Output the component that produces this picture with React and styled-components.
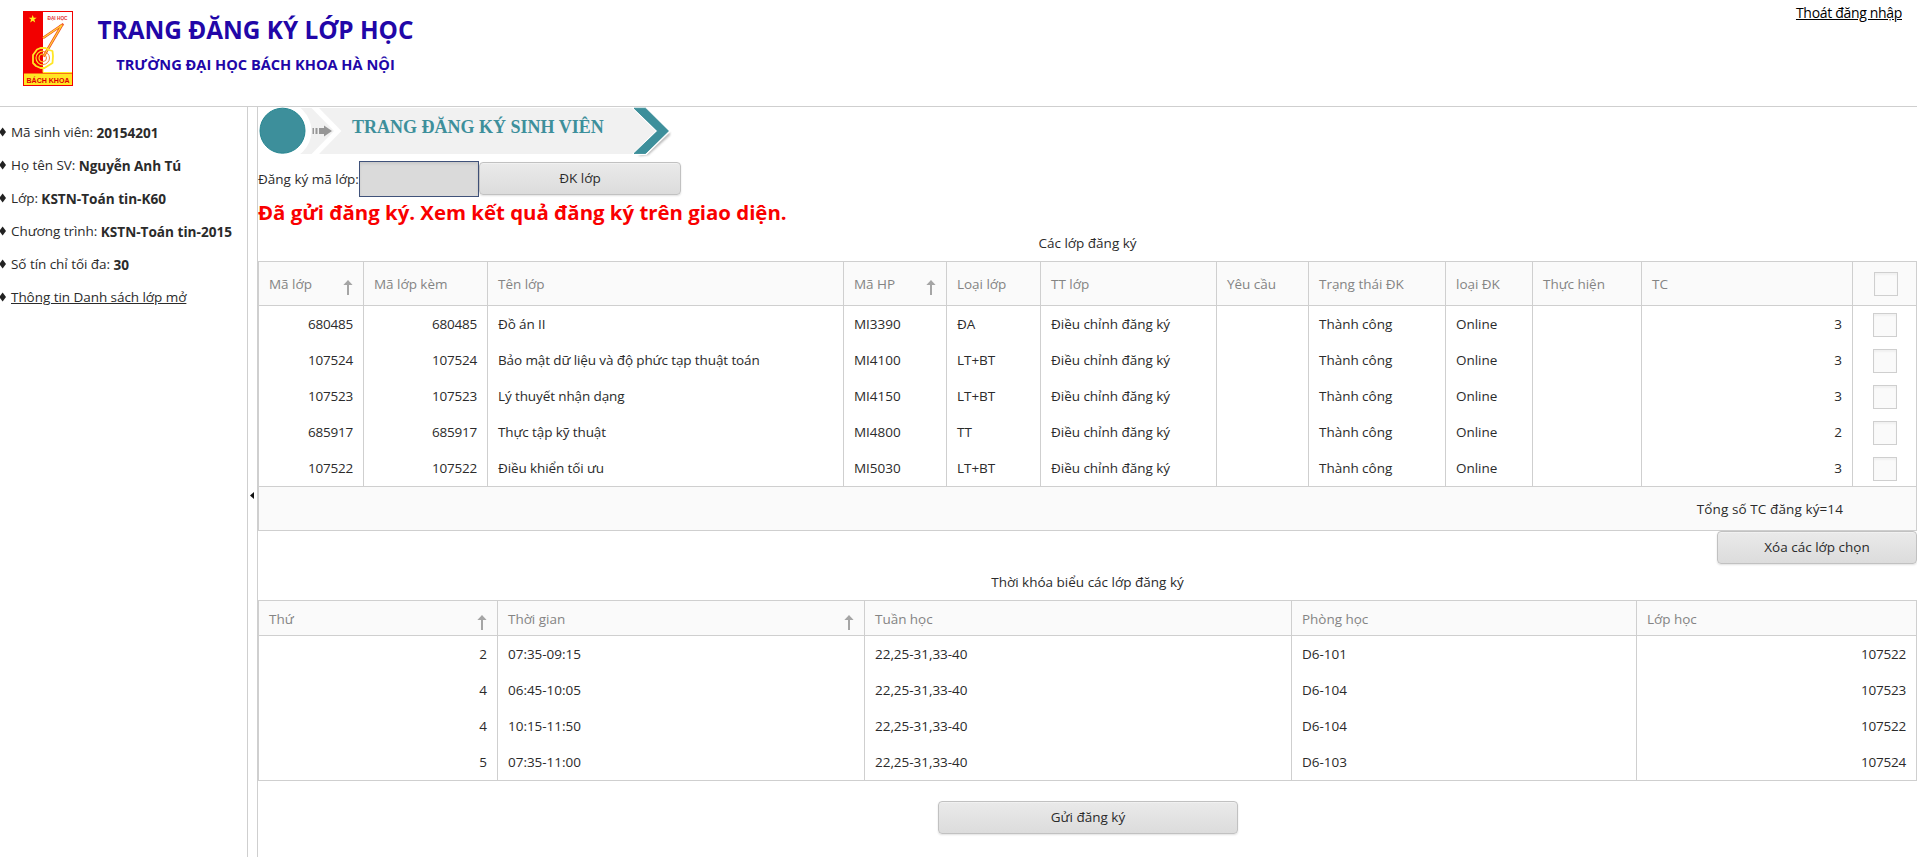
import React from 'react';
import styled, { createGlobalStyle } from 'styled-components';

const line = '#cfcfcf';

const GlobalStyle = createGlobalStyle`
  * { box-sizing: border-box; }
  body {
    margin: 0;
    background: #fff;
    color: #2b2b2b;
    font-family: "Open Sans", "Noto Sans", sans-serif;
    font-size: 13.5px;
    overflow: hidden;
  }
`;

const Page = styled.div`
  display: flex;
  flex-direction: column;
  height: 100vh;
`;

const Header = styled.header`
  display: flex;
  align-items: flex-start;
  height: 107px;
  padding: 11px 15px 0 23px;
  border-bottom: 1px solid ${line};
`;

const Logo = styled.svg`
  flex: none;
  width: 50px;
  height: 75px;
  overflow: visible;
`;

const Titles = styled.div`
  display: flex;
  flex-direction: column;
  align-items: center;
  width: 317px;
  margin-left: 24px;
  color: #2106a8;
  font-weight: 700;
  white-space: nowrap;
`;

const Title = styled.div`
  font-size: 24.35px;
  line-height: 38px;
`;

const Subtitle = styled.div`
  font-size: 14.6px;
  line-height: 28px;
  margin-top: 1px;
`;

const Logout = styled.a`
  margin: -9px 0 0 auto;
  color: #000;
  font-size: 14px;
  letter-spacing: -0.32px;
  line-height: 22px;
  text-decoration: underline;
`;

const Body = styled.div`
  display: flex;
  flex: 1;
  min-height: 0;
`;

const Sidebar = styled.aside`
  width: 248px;
  padding-top: 9px;
  border-right: 1px solid ${line};
`;

const Info = styled.div`
  display: flex;
  align-items: center;
  height: 33px;
  line-height: 33px;
  white-space: pre;
  letter-spacing: ${(p) => p.$tracking || 0}px;
  b { font-size: 13.6px; letter-spacing: ${(p) => p.$bold || 0}px; }
  a { text-decoration: underline; }
`;

const Bullet = styled.svg`
  flex: none;
  width: 6px;
  height: 10px;
  margin: 0 5px 2px 0;
`;

const Splitter = styled.div`
  display: flex;
  align-items: center;
  justify-content: center;
  width: 10px;
  padding: 26px 1px 0 0;
  border-right: 1px solid ${line};
`;

const Main = styled.main`
  display: flex;
  flex-direction: column;
  flex: 1;
  min-width: 0;
`;

const Banner = styled.div`
  display: grid;
  height: 54px;
  > * { grid-area: 1 / 1; }
`;

const BannerTitle = styled.h1`
  margin: 0 0 0 94px;
  color: #3d8f9b;
  font: 700 18px/20px "Liberation Serif", serif;
  padding-top: 10px;
`;

const RegisterForm = styled.div`
  display: flex;
  align-items: center;
  height: 36px;
`;

const Label = styled.label`
  width: 101px;
  white-space: nowrap;
  padding-bottom: 1px;
`;

const CodeInput = styled.input`
  width: 120px;
  height: 36px;
  padding: 0 6px;
  border: 1px solid #40527a;
  border-radius: 0;
  background: #dadada;
  box-shadow: inset 0 2px 3px rgba(0, 0, 0, 0.08);
  outline: none;
`;

const Button = styled.button`
  width: ${(p) => p.$width}px;
  height: 33px;
  padding: 0 0 2px;
  border: 1px solid #c1c1c1;
  border-radius: 4px;
  background: linear-gradient(#eaeaea, #dcdcdc);
  box-shadow: 0 1px 2px rgba(0, 0, 0, 0.12), inset 0 1px 0 rgba(255, 255, 255, 0.35);
  color: #2b2b2b;
  font: inherit;
`;

const SubmitButton = styled(Button)`
  align-self: center;
  margin: 20px 0 0 1px;
`;

const DeleteButton = styled(Button)`
  align-self: flex-end;
`;

const RegisterButton = styled(Button)`
  margin-bottom: 1px;
`;

const Message = styled.div`
  height: 31px;
  color: #f90000;
  font-size: 20.4px;
  font-weight: 700;
  line-height: 31px;
`;

const Caption = styled.div`
  height: ${(p) => p.$height}px;
  line-height: ${(p) => p.$line}px;
  text-align: center;
`;

const Grid = styled.div`
  border: 1px solid ${line};
  border-right: 0;
`;

const Row = styled.div`
  display: grid;
  grid-template-columns: ${(p) => p.$columns};
  height: 36px;
`;

const HeadRow = styled(Row)`
  height: ${(p) => p.$height}px;
  border-bottom: 1px solid ${line};
  background: #fafafa;
  color: #848484;
`;

const Cell = styled.div`
  display: flex;
  align-items: center;
  justify-content: ${(p) => p.$align || 'flex-start'};
  padding: 0 10px;
  border-right: 1px solid ${line};
  white-space: nowrap;
  letter-spacing: ${(p) => p.$tracking ?? -0.03}px;
`;

const HeadCell = styled(Cell)`
  justify-content: space-between;
  padding-top: ${(p) => p.$top || 0}px;
`;

const CheckCell = styled(Cell)`
  justify-content: center;
  padding: ${(p) => (p.$head ? '0 0 0 2px' : '2px 0 0 1px')};
`;

const CheckBox = styled.span`
  width: 24px;
  height: 24px;
  border: 1px solid ${line};
  background: #fafafa;
  box-shadow: inset 0 2px 2px rgba(0, 0, 0, 0.04);
`;

const SortIcon = styled.svg`
  width: 10px;
  height: 15px;
  margin-top: 7px;
`;

const Footer = styled.div`
  display: flex;
  align-items: center;
  justify-content: flex-end;
  height: 43px;
  padding-right: 73px;
  border-top: 1px solid ${line};
  border-right: 1px solid ${line};
  background: #fafafa;
  box-sizing: content-box;
  letter-spacing: 0.1px;
`;

const classColumns = '105px 124px 356px 103px 94px 176px 92px 137px 87px 109px 211px 1fr';
const timeColumns = '239px 367px 427px 345px 1fr';

const classHeads = ['Mã lớp', 'Mã lớp kèm', 'Tên lớp', 'Mã HP', 'Loại lớp', 'TT lớp', 'Yêu cầu', 'Trạng thái ĐK', 'loại ĐK', 'Thực hiện', 'TC'];
const classes = [
  ['680485', 'Đồ án II', 'MI3390', 'ĐA', '3'],
  ['107524', 'Bảo mật dữ liệu và độ phức tạp thuật toán', 'MI4100', 'LT+BT', '3'],
  ['107523', 'Lý thuyết nhận dạng', 'MI4150', 'LT+BT', '3'],
  ['685917', 'Thực tập kỹ thuật', 'MI4800', 'TT', '2'],
  ['107522', 'Điều khiển tối ưu', 'MI5030', 'LT+BT', '3'],
];

const timeHeads = ['Thứ', 'Thời gian', 'Tuần học', 'Phòng học', 'Lớp học'];
const times = [
  ['2', '07:35-09:15', 'D6-101', '107522'],
  ['4', '06:45-10:05', 'D6-104', '107523'],
  ['4', '10:15-11:50', 'D6-104', '107522'],
  ['5', '07:35-11:00', 'D6-103', '107524'],
];

const info = [
  ['Mã sinh viên: ', '20154201', 0],
  ['Họ tên SV: ', 'Nguyễn Anh Tú', -0.08],
  ['Lớp: ', 'KSTN-Toán tin-K60', 0],
  ['Chương trình: ', 'KSTN-Toán tin-2015', 0],
  ['Số tín chỉ tối đa: ', '30', 0],
];

function Sort() {
  return (
    <SortIcon viewBox="0 0 10 15">
      <path d="M5 0 9.6 5H.4Z" fill="#a5a5a5" />
      <path d="M4 4h2v11H4z" fill="#a5a5a5" />
    </SortIcon>
  );
}

function Diamond() {
  return (
    <Bullet viewBox="0 0 6 10">
      <path d="M2.6 0.6 6 5 2.6 9.4 0 6V4Z" fill="#222" />
    </Bullet>
  );
}

function SchoolLogo() {
  return (
    <Logo viewBox="0 0 50 75">
      <rect width="50" height="75" fill="#f20000" />
      <rect x="20" y="1" width="29" height="60" fill="#fff" />
      <path d="m9.7 4 1 2.800h3l-2.400 1.800.9 2.800-2.500-1.700-2.500 1.700.9-2.800L5.700 6.800h3z" fill="#ffef20" />
      <g fill="none" strokeLinejoin="round">
        <path d="m20 27 19-13-18.500 31.500M40.500 13l-4 2.500" stroke="#f04a20" strokeWidth="2.600" />
        <path d="m20 27 19-13-18.500 31.500" stroke="#ffd83a" strokeWidth="1.200" />
        <path d="m14 38.500 3.500-1.500h5l3.500 2 3.500 1 .5 5-.5 7-4 2.500-4 2.500h-4L13 55l-3-3v-8Z" stroke="#ffe625" strokeWidth="1.800" />
        <path d="M20 40a7 7 0 1 0 0 14M20 43a4 4 0 1 0 0 8" stroke="#ffed25" strokeWidth="1.100" />
        <path d="M20 40.500a6.500 6.500 0 0 1 0 13M20 43.500a3.500 3.500 0 0 1 0 7" stroke="#f47a20" strokeWidth="0.900" />
        <path d="M20 56v5.500h29" stroke="#ffed25" strokeWidth="1" />
      </g>
      <rect x="1" y="62.500" width="48" height="11.500" fill="#ffe624" />
      <text x="25" y="71.900" textAnchor="middle" textLength="43" lengthAdjust="spacingAndGlyphs" fill="#e20000" fontFamily="Liberation Sans, sans-serif" fontSize="7.900" fontWeight="700">BÁCH KHOA</text>
      <text x="34.500" y="9" textAnchor="middle" textLength="20" lengthAdjust="spacingAndGlyphs" fill="#e23030" fontFamily="Liberation Sans, sans-serif" fontSize="4.800" fontWeight="700">ĐẠI HỌC</text>
    </Logo>
  );
}

function BannerArt() {
  return (
    <svg width="420" height="54" viewBox="0 0 420 54">
      <defs>
        <filter id="soft" x="-20%" y="-20%" width="150%" height="150%">
          <feGaussianBlur stdDeviation="1.3" />
        </filter>
      </defs>
      <path d="M40 1H376l30 23-30 23H40Z" fill="#f1f1f1" />
      <circle cx="24" cy="24" r="29.500" fill="#fff" />
      <path d="M53.500 1h7.500l22.500 23L61 47h-7.500L76 24Z" fill="#fff" />
      <path d="M380 49l32-24v3l-22 20Z" fill="#777" opacity="0.55" filter="url(#soft)" />
      <path d="M373 0h15.500L413 24 388.500 48H373l24.500-24Z" fill="#fff" />
      <path d="M376 1.200h11.500L410.500 24 387.500 46.500H376L399.500 24Z" fill="#3d8f9b" stroke="#26818c" strokeWidth="0.700" />
      <circle cx="24.500" cy="23.700" r="22.500" fill="#3d8f9b" stroke="#258590" />
      <path d="M54.500 21H56v6h-1.500zM57.500 21h2v6h-2zM61 21h5v-2.500l8 5.500-8 5.500V27h-5z" fill="#969696" />
    </svg>
  );
}

export default function App() {
  return (
    <Page>
      <GlobalStyle />
      <Header>
        <SchoolLogo />
        <Titles>
          <Title>TRANG ĐĂNG KÝ LỚP HỌC</Title>
          <Subtitle>TRƯỜNG ĐẠI HỌC BÁCH KHOA HÀ NỘI</Subtitle>
        </Titles>
        <Logout>Thoát đăng nhập</Logout>
      </Header>
      <Body>
        <Sidebar>
          {info.map(([label, value, tracking]) => (
            <Info key={label} $bold={tracking} $tracking={-0.05}>
              <Diamond />
              <span>{label}</span>
              <b>{value}</b>
            </Info>
          ))}
          <Info $tracking={-0.05}>
            <Diamond />
            <a>Thông tin Danh sách lớp mở</a>
          </Info>
        </Sidebar>
        <Splitter>
          <svg width="4" height="7" viewBox="0 0 4 7"><path d="M4 0v7L0 3.500Z" fill="#111" /></svg>
        </Splitter>
        <Main>
          <Banner>
            <BannerArt />
            <BannerTitle>TRANG ĐĂNG KÝ SINH VIÊN</BannerTitle>
          </Banner>
          <RegisterForm>
            <Label>Đăng ký mã lớp:</Label>
            <CodeInput />
            <RegisterButton $width={202}>ĐK lớp</RegisterButton>
          </RegisterForm>
          <Message>Đã gửi đăng ký. Xem kết quả đăng ký trên giao diện.</Message>
          <Caption $height={33} $line={30}>Các lớp đăng ký</Caption>
          <Grid>
            <HeadRow $columns={classColumns} $height={44}>
              {classHeads.map((name, i) => (
                <HeadCell key={name}>
                  {name}
                  {(i === 0 || i === 3) && <Sort />}
                </HeadCell>
              ))}
              <CheckCell $head><CheckBox /></CheckCell>
            </HeadRow>
            {classes.map(([code, name, course, kind, credits]) => (
              <Row key={code} $columns={classColumns}>
                <Cell $align="flex-end" $tracking={-0.2}>{code}</Cell>
                <Cell $align="flex-end" $tracking={-0.2}>{code}</Cell>
                <Cell $tracking={-0.11}>{name}</Cell>
                <Cell>{course}</Cell>
                <Cell>{kind}</Cell>
                <Cell>Điều chỉnh đăng ký</Cell>
                <Cell />
                <Cell>Thành công</Cell>
                <Cell>Online</Cell>
                <Cell />
                <Cell $align="flex-end">{credits}</Cell>
                <CheckCell><CheckBox /></CheckCell>
              </Row>
            ))}
            <Footer>Tổng số TC đăng ký=14</Footer>
          </Grid>
          <DeleteButton $width={200}>Xóa các lớp chọn</DeleteButton>
          <Caption $height={36} $line={36}>Thời khóa biểu các lớp đăng ký</Caption>
          <Grid>
            <HeadRow $columns={timeColumns} $height={35}>
              {timeHeads.map((name, i) => (
                <HeadCell key={name} $top={2}>
                  {name}
                  {i < 2 && <Sort />}
                </HeadCell>
              ))}
            </HeadRow>
            {times.map(([day, time, room, code]) => (
              <Row key={time} $columns={timeColumns}>
                <Cell $align="flex-end">{day}</Cell>
                <Cell>{time}</Cell>
                <Cell>22,25-31,33-40</Cell>
                <Cell>{room}</Cell>
                <Cell $align="flex-end" $tracking={-0.2}>{code}</Cell>
              </Row>
            ))}
          </Grid>
          <SubmitButton $width={300}>Gửi đăng ký</SubmitButton>
        </Main>
      </Body>
    </Page>
  );
}
